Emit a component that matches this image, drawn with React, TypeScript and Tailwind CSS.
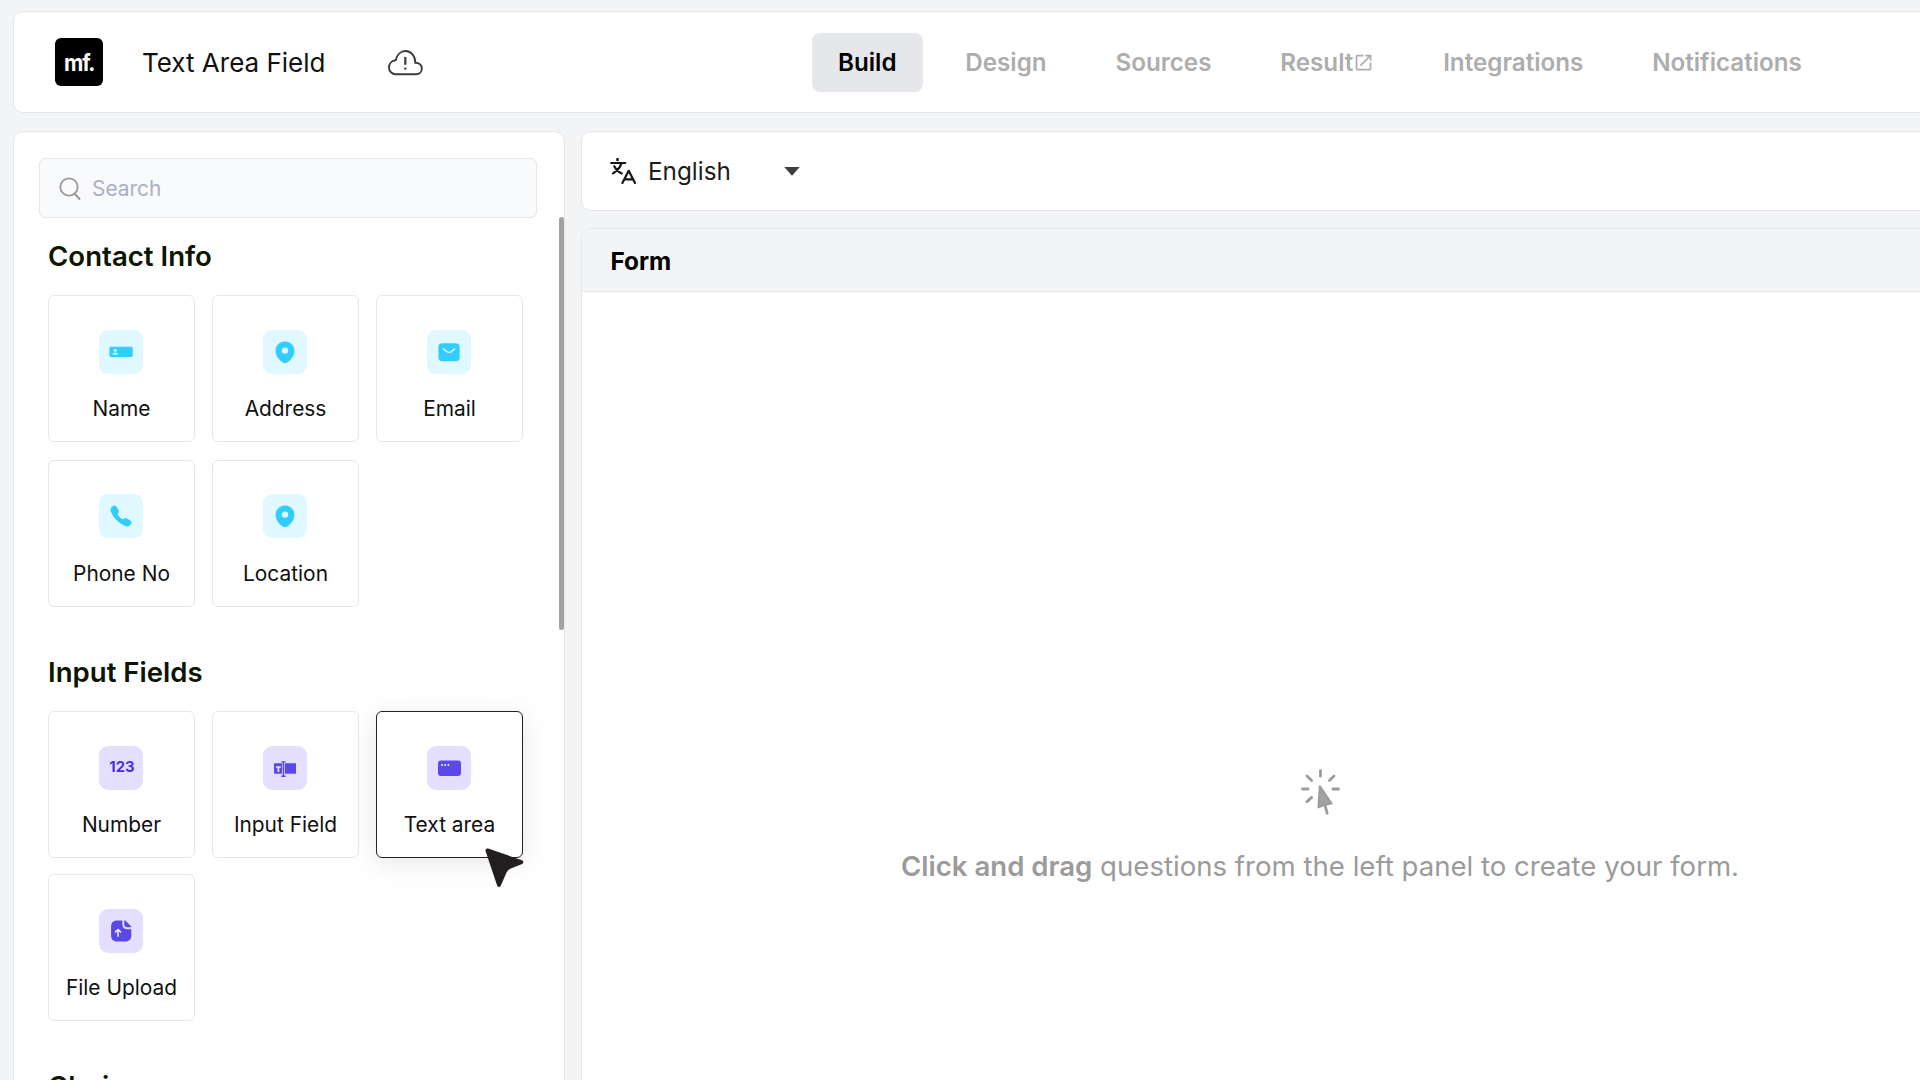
import type { ReactNode } from 'react'
import clsx from 'clsx'
import { IoCall } from 'react-icons/io5'
import { MdOpenInNew } from 'react-icons/md'

interface Field {
  label: string
  icon: ReactNode
  active?: boolean
}

interface FieldGroup {
  title: string
  tile: string
  grid: string
  fields: Field[]
}

const tabs = [
  { label: 'Build', active: true },
  { label: 'Design' },
  { label: 'Sources' },
  { label: 'Result', external: true },
  { label: 'Integrations' },
  { label: 'Notifications' },
]

function NameIcon() {
  return (
    <svg viewBox="0 0 44 44" className="size-11">
      <rect x="10.4" y="16.8" width="23.4" height="10.2" rx="1.8" fill="#32cdff" />
      <circle cx="16.3" cy="20.3" r="1.5" fill="#e0f8ff" />
      <path d="M13.6 24.8c0-1.6 1.2-2.3 2.7-2.3s2.7.7 2.7 2.3z" fill="#e0f8ff" />
    </svg>
  )
}

function PinIcon() {
  return (
    <svg viewBox="0 0 44 44" className="size-11">
      <path
        d="M22 11.5c-5.4 0-9.4 4.1-9.4 9.2 0 4.9 3.2 9.3 7.3 11.7 1.3.8 2.9.8 4.2 0 4.1-2.4 7.3-6.8 7.3-11.7 0-5.1-4-9.2-9.4-9.2z"
        fill="#32cdff"
      />
      <circle cx="22" cy="20.6" r="3.2" fill="#e0f8ff" />
    </svg>
  )
}

function EmailIcon() {
  return (
    <svg viewBox="0 0 44 44" className="size-11">
      <rect x="11.4" y="13.2" width="21.3" height="18" rx="4" fill="#32cdff" />
      <path
        d="M16.3 18.9l3.9 3c1.1.8 2.6.8 3.7 0l3.9-3"
        fill="none"
        stroke="#e0f8ff"
        strokeWidth="1.4"
        strokeLinecap="round"
      />
    </svg>
  )
}

function InputIcon() {
  return (
    <svg viewBox="0 0 44 44" className="size-11" fill="#5b48e8">
      <rect x="11" y="17.2" width="8.1" height="10.6" rx="0.8" />
      <rect x="21.8" y="17.2" width="11.2" height="10.6" rx="0.8" />
      <path d="M13 20.2h4.8v1.9h-1.5v4h-1.8v-4H13z" fill="#e4dfff" />
      <path d="M18.3 15.9h4.3M20.45 15.5v15M18.3 30.3h4.3" stroke="#5b48e8" strokeWidth="1.4" />
    </svg>
  )
}

function TextAreaIcon() {
  return (
    <svg viewBox="0 0 44 44" className="size-11">
      <rect x="11" y="14.4" width="23" height="15.6" rx="3" fill="#5b48e8" />
      <g fill="#fff">
        <circle cx="15" cy="19" r="0.9" />
        <circle cx="18.2" cy="19" r="0.9" />
        <circle cx="21.4" cy="19" r="0.9" />
      </g>
    </svg>
  )
}

function UploadIcon() {
  return (
    <svg viewBox="0 0 44 44" className="size-11">
      <path
        d="M18 11.4h5.3v3.8c0 3.1 2 5 5 5h4v6.2c0 3.8-2.1 6-5.9 6H18c-3.8 0-5.9-2.2-5.9-6v-9c0-3.8 2.1-6 5.9-6z"
        fill="#5b48e8"
      />
      <path d="M25.3 11.8c0-.6.6-.8 1-.4l5.7 5.9c.4.4.1 1-.4 1h-3.2c-1.9 0-3.1-1.2-3.1-3z" fill="#5b48e8" />
      <path
        d="M19 27.3v-6.4M16.4 23.1l2.6-2.5 2.6 2.5"
        fill="none"
        stroke="#fff"
        strokeWidth="1.4"
        strokeLinecap="round"
        strokeLinejoin="round"
      />
    </svg>
  )
}

const groups: FieldGroup[] = [
  {
    title: 'Contact Info',
    tile: 'bg-[#e0f8ff]',
    grid: 'mt-[21px] gap-y-[17.5px]',
    fields: [
      { label: 'Name', icon: <NameIcon /> },
      { label: 'Address', icon: <PinIcon /> },
      { label: 'Email', icon: <EmailIcon /> },
      { label: 'Phone No', icon: <IoCall className="size-6 text-[#32cdff]" /> },
      { label: 'Location', icon: <PinIcon /> },
    ],
  },
  {
    title: 'Input Fields',
    tile: 'bg-[#e4dfff]',
    grid: 'mt-[21.5px] gap-y-4',
    fields: [
      {
        label: 'Number',
        icon: <span className="pl-0.5 text-[14.8px] font-bold text-[#4a30e0]">123</span>,
      },
      { label: 'Input Field', icon: <InputIcon /> },
      { label: 'Text area', icon: <TextAreaIcon />, active: true },
      { label: 'File Upload', icon: <UploadIcon /> },
    ],
  },
  { title: 'Choices', tile: '', grid: '', fields: [] },
]

function Pointer() {
  return (
    <svg viewBox="0 0 40 40" className="absolute top-[136px] left-[108px] z-10 size-10">
      <path
        d="M2.5 2.5L36.3 14.1 26.5 18.1Q21.5 19.6 19.6 24L14 36.8z"
        fill="#231f20"
        stroke="#231f20"
        strokeWidth="4"
        strokeLinejoin="round"
      />
    </svg>
  )
}

function FieldCard({ field, tile }: { field: Field; tile: string }) {
  return (
    <div
      className={clsx(
        'relative flex h-[147px] w-[147px] flex-col items-center rounded-md border bg-white pt-[33.5px]',
        field.active ? 'border-[#222] shadow-[0_5px_28px_rgba(0,0,0,0.1)]' : 'border-gray-200'
      )}
    >
      <div className={clsx('mr-px flex size-11 items-center justify-center rounded-[9px]', tile)}>{field.icon}</div>
      <span className="mt-[21.5px] text-[20.9px] leading-7 whitespace-nowrap text-[#111]">{field.label}</span>
      {field.active && <Pointer />}
    </div>
  )
}

function Header() {
  return (
    <header className="flex h-[102px] w-[2045px] shrink-0 items-center rounded-[10px] border border-gray-200 bg-white">
      <div className="ml-[41px] flex size-12 items-center justify-center rounded-md bg-black">
        <span className="scale-x-[0.94] pt-0.5 text-[22.5px] leading-none font-bold tracking-[-1.2px] text-white">
          mf.
        </span>
      </div>
      <h1 className="ml-[39px] w-[246px] pt-px text-[26px] leading-8 text-[#111]">Text Area Field</h1>
      <svg viewBox="0 0 35 26" className="mt-px h-[26px] w-[35px]" fill="none" stroke="#3a3a3a" strokeWidth="1.9">
        <path d="M7.6 24.2C4 24.2 1 21.3 1 17.4c0-3.7 2.6-6.9 6.7-7.2C9 4.8 12.7 1 17.4 1c5.4 0 9.8 4.5 9.9 11.7 3.7 0 6.5 2.4 6.5 5.8 0 3.3-2.5 5.7-5.6 5.7z" />
        <path d="M17.3 7v7.8" strokeWidth="2.2" />
        <circle cx="17.3" cy="18.6" r="1.2" fill="#3a3a3a" stroke="none" />
      </svg>
      <nav className="ml-[389px] flex gap-[16.8px]">
        {tabs.map((tab) => (
          <a
            key={tab.label}
            className={clsx(
              'flex h-[59px] items-center rounded-lg px-[26px] text-[24.2px] font-semibold',
              tab.active ? 'bg-[#e5e7eb] text-black' : 'text-[#adadad]'
            )}
          >
            <span className="pt-0.5">{tab.label}</span>
            {tab.external && <MdOpenInNew className="mt-px size-[21px]" />}
          </a>
        ))}
      </nav>
    </header>
  )
}

function FieldPanel() {
  return (
    <aside className="relative w-[552px] shrink-0 overflow-hidden rounded-t-[10px] border border-b-0 border-gray-200 bg-white">
      <div className="mt-[26px] ml-[25px] flex h-[60px] w-[498px] items-center rounded-md border border-gray-200 bg-gray-50 pl-[19px]">
        <svg viewBox="0 0 22 23" className="h-[23px] w-[22px]" fill="none" stroke="#999" strokeWidth="1.8">
          <circle cx="10" cy="10" r="8.7" />
          <path d="M15.5 16.5l5 5.5" strokeWidth="2" strokeLinecap="round" />
        </svg>
        <span className="ml-[11px] pt-px text-[20.9px] text-[#a9b1bf]">Search</span>
      </div>
      <div className="mt-5 flex flex-col gap-[47px] pl-[34px]">
        {groups.map((group) => (
          <section key={group.title}>
            <h2 className="text-[27.6px] leading-9 font-semibold text-[#0d1400]">{group.title}</h2>
            {group.fields.length > 0 && (
              <div className={clsx('grid grid-cols-[164px_164px_147px]', group.grid)}>
                {group.fields.map((field) => (
                  <FieldCard key={field.label} field={field} tile={group.tile} />
                ))}
              </div>
            )}
          </section>
        ))}
      </div>
      {/* Scroll thumb */}
      <div className="absolute top-[85px] right-0 h-[413px] w-[5px] rounded-full bg-[#a2a2a2]" />
    </aside>
  )
}

function LanguageBar() {
  return (
    <div className="flex h-20 items-center rounded-[10px] border border-gray-200 bg-white pl-7">
      <svg
        viewBox="0 0 26 26"
        className="mb-px size-[26px]"
        fill="none"
        stroke="#161616"
        strokeWidth="2.2"
        strokeLinecap="round"
      >
        <path d="M7.5 1v1" strokeWidth="2.6" />
        <path d="M1.2 5h14M11.3 5.4C10.2 9.6 6.8 13 3 15.4M4.3 8.3c1.4 3 4 5.5 7.4 7.1" />
        <path d="M12.4 25l6.3-12.2L25 25M14.7 21.3h8.2" strokeLinejoin="round" />
      </svg>
      <span className="ml-3 w-[136px] text-[24.3px] text-[#1c1c1c]">English</span>
      <svg viewBox="0 0 16 9" className="h-[9px] w-4">
        <path d="M0.3 0h15.4L8 8.8z" fill="#3f3f42" />
      </svg>
    </div>
  )
}

function ClickIcon() {
  return (
    <svg
      viewBox="0 0 39 46"
      className="h-[46px] w-[39px]"
      fill="none"
      stroke="#9b9b9b"
      strokeWidth="2.8"
      strokeLinecap="round"
      strokeLinejoin="round"
    >
      <path d="M19.5 1.6v5.6M6 7l4.6 4.4M33 7l-4.6 4.4M1.5 20H7M31.9 20h5.6M6 32.6l4.6-4.2" />
      <path d="M18.9 17.3l11.6 17.2-6.4 1.1-6.5 2.7z" fill="#a3a3a3" strokeWidth="2.2" />
      <path d="M23.9 36l2.2 8.2" />
    </svg>
  )
}

function FormCanvas() {
  return (
    <div className="flex flex-1 flex-col rounded-t-[10px] border border-b-0 border-gray-200 bg-white">
      <div className="flex h-[63px] items-center rounded-t-[10px] border-b border-gray-200 bg-gray-100 pt-0.5 pl-[28.5px] text-[24.3px] font-bold text-black">
        Form
      </div>
      <div className="flex flex-col items-center pt-[477px] text-[27.6px] leading-9 text-[#9b9b9b]">
        <ClickIcon />
        <p className="mt-[33px]">
          <span className="font-semibold">Click and drag</span> questions from the left panel to create your form.
        </p>
      </div>
    </div>
  )
}

export default function App() {
  return (
    <div className="flex h-screen w-screen flex-col gap-[18px] overflow-hidden bg-gray-100 pt-[11px] pl-[13px] font-['Inter',sans-serif]">
      <Header />
      <div className="flex min-h-0 flex-1 gap-4">
        <FieldPanel />
        <main className="flex w-[1478px] shrink-0 flex-col gap-[17px]">
          <LanguageBar />
          <FormCanvas />
        </main>
      </div>
    </div>
  )
}
